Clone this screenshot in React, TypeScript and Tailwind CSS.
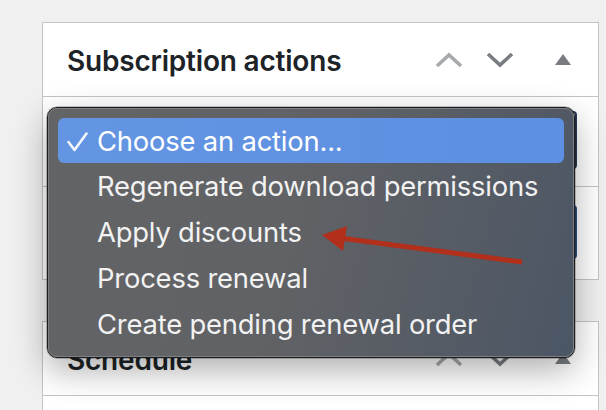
import React from "react";

const ChevUp = ({ color }: { color: string }) => (
  <svg width="28" height="16" viewBox="0 0 28 16" className="block">
    <polyline points="2,14 14,3 26,14" fill="none" stroke={color} strokeWidth="3.6" />
  </svg>
);
const ChevDown = ({ color }: { color: string }) => (
  <svg width="28" height="16" viewBox="0 0 28 16" className="block">
    <polyline points="2,2 14,13 26,2" fill="none" stroke={color} strokeWidth="3.6" />
  </svg>
);
const Tri = () => (
  <svg width="16" height="12" viewBox="0 0 16 12" className="block">
    <polygon points="8,0 16,11 0,11" fill="#787c82" />
  </svg>
);

function Header({ title }: { title: string }) {
  return (
    <div className="flex h-[74px] items-center justify-between border-b border-[#c3c4c7] pl-[24px] pr-[27px]">
      <h2
        className="pt-[2px] text-[28px] font-semibold tracking-[-0.2px] text-[#1d2327]"
        style={{ fontFamily: "Inter, 'Liberation Sans', sans-serif" }}
      >
        {title}
      </h2>
      <div className="flex items-center pt-[1px]">
        <ChevUp color="#a7aaad" />
        <div className="ml-[23px]">
          <ChevDown color="#787c82" />
        </div>
        <div className="ml-[41px]">
          <Tri />
        </div>
      </div>
    </div>
  );
}

const items = [
  "Choose an action...",
  "Regenerate download permissions",
  "Apply discounts",
  "Process renewal",
  "Create pending renewal order",
];

export default function App() {
  return (
    <div className="relative h-[410px] w-[606px] overflow-hidden bg-[#f0f0f1] pl-[42px] pt-[22px]">
      <div className="w-[557px] border border-[#c3c4c7] bg-white">
        <Header title="Subscription actions" />
        <div className="h-[90px] border-b border-[#c3c4c7] pr-[21px] pt-[14px]">
          <div className="ml-auto h-[58px] w-[500px] rounded-[4px] border-2 border-[#2a3a55]" />
        </div>
        <div className="h-[92px] pr-[21px] pt-[18px]">
          <div className="ml-auto h-[54px] w-[140px] rounded-[4px] border-2 border-[#2d4f86]" />
        </div>
      </div>
      <div className="mt-[41px] w-[557px] border border-[#c3c4c7] bg-white">
        <Header title="Schedule" />
        <div className="h-[40px]" />
      </div>

      {/* native select menu */}
      <div
        className="absolute left-[47px] top-[107px] h-[251px] w-[528px] rounded-[10px] border border-[#1c1c1e] p-[10px] shadow-[0_12px_34px_rgba(0,0,0,0.32),0_0_0_0.5px_rgba(0,0,0,0.4)]"
        style={{
          background:
            "linear-gradient(105deg, #636466 0%, #616265 45%, #565c65 75%, #4b5665 100%)",
        }}
      >
        <div className="pointer-events-none absolute inset-0 rounded-[9px] border border-[#7d7f83]" />
        <div
          className="relative flex flex-col text-[27.4px] text-[#f2f2f2]"
          style={{ fontFamily: "Inter, 'Liberation Sans', sans-serif" }}
        >
          {items.map((t, i) =>
            i === 0 ? (
              <div
                key={t}
                className="relative flex h-[45px] items-center rounded-[6px] bg-[#5f91e1] pl-[39px] pt-[2px] text-white"
                style={{ background: "linear-gradient(90deg,#6495e2,#5d8fe2)" }}
              >
                <svg
                  className="absolute left-[9px] top-[14px]"
                  width="21"
                  height="20"
                  viewBox="0 0 21 20"
                >
                  <polyline
                    points="1.5,10 7.5,18 19.5,1.5"
                    fill="none"
                    stroke="#f4f6fb"
                    strokeWidth="2.6"
                    strokeLinecap="round"
                    strokeLinejoin="round"
                  />
                </svg>
                <span className="tracking-[-0.2px]">{t}</span>
              </div>
            ) : (
              <div key={t} className="flex h-[46px] items-center pl-[39px] pt-[2px]">
                <span className="tracking-[-0.2px]">{t}</span>
              </div>
            )
          )}
        </div>
      </div>

      {/* red annotation arrow */}
      <svg className="pointer-events-none absolute left-0 top-0" width="606" height="410">
        <line x1="522" y1="262" x2="340" y2="238" stroke="#b12f1b" strokeWidth="5" />
        <polygon points="322,235 347,226 343,251" fill="#b12f1b" />
      </svg>
    </div>
  );
}
